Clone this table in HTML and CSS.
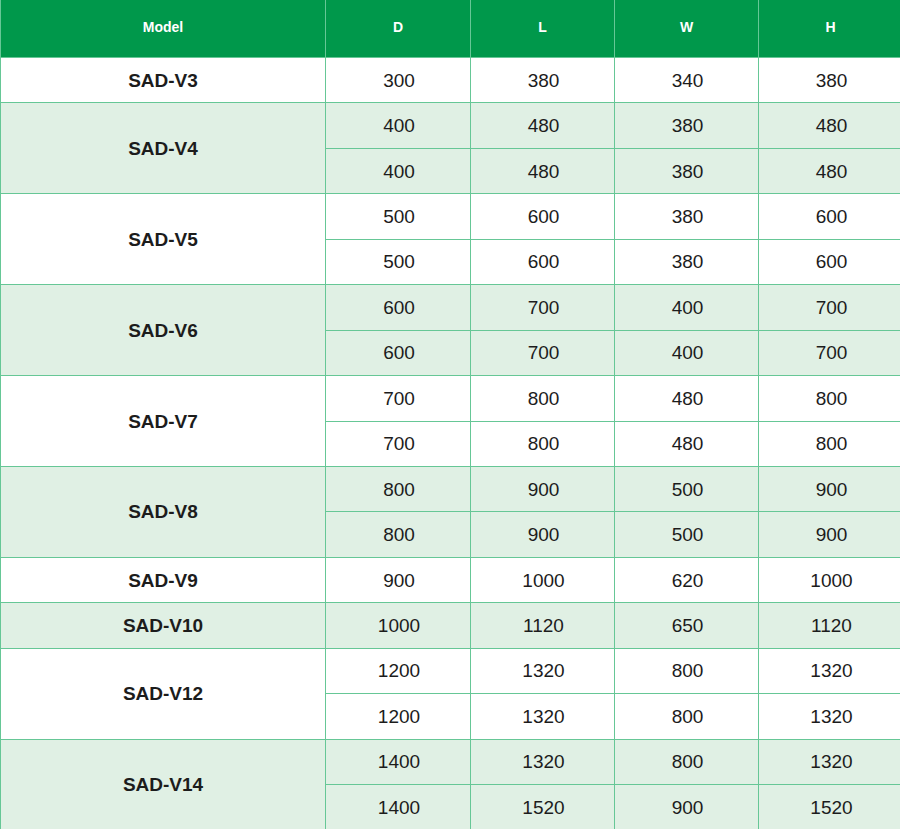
FILE: index.html
```html
<!DOCTYPE html>
<html>
<head>
<meta charset="utf-8">
<link rel="stylesheet" href="styles.css">
</head>
<body>
<div class="table">
  <div class="th">Model</div><div class="th">D</div><div class="th">L</div><div class="th">W</div><div class="th">H</div>

  <div class="c m w">SAD-V3</div><div class="c w">300</div><div class="c w">380</div><div class="c w">340</div><div class="c w">380</div>

  <div class="c m g s2">SAD-V4</div><div class="c g">400</div><div class="c g">480</div><div class="c g">380</div><div class="c g">480</div>
  <div class="c g">400</div><div class="c g">480</div><div class="c g">380</div><div class="c g">480</div>

  <div class="c m w s2">SAD-V5</div><div class="c w">500</div><div class="c w">600</div><div class="c w">380</div><div class="c w">600</div>
  <div class="c w">500</div><div class="c w">600</div><div class="c w">380</div><div class="c w">600</div>

  <div class="c m g s2">SAD-V6</div><div class="c g">600</div><div class="c g">700</div><div class="c g">400</div><div class="c g">700</div>
  <div class="c g">600</div><div class="c g">700</div><div class="c g">400</div><div class="c g">700</div>

  <div class="c m w s2">SAD-V7</div><div class="c w">700</div><div class="c w">800</div><div class="c w">480</div><div class="c w">800</div>
  <div class="c w">700</div><div class="c w">800</div><div class="c w">480</div><div class="c w">800</div>

  <div class="c m g s2">SAD-V8</div><div class="c g">800</div><div class="c g">900</div><div class="c g">500</div><div class="c g">900</div>
  <div class="c g">800</div><div class="c g">900</div><div class="c g">500</div><div class="c g">900</div>

  <div class="c m w">SAD-V9</div><div class="c w">900</div><div class="c w">1000</div><div class="c w">620</div><div class="c w">1000</div>

  <div class="c m g">SAD-V10</div><div class="c g">1000</div><div class="c g">1120</div><div class="c g">650</div><div class="c g">1120</div>

  <div class="c m w s2">SAD-V12</div><div class="c w">1200</div><div class="c w">1320</div><div class="c w">800</div><div class="c w">1320</div>
  <div class="c w">1200</div><div class="c w">1320</div><div class="c w">800</div><div class="c w">1320</div>

  <div class="c m g s2">SAD-V14</div><div class="c g">1400</div><div class="c g">1320</div><div class="c g">800</div><div class="c g">1320</div>
  <div class="c g">1400</div><div class="c g">1520</div><div class="c g">900</div><div class="c g">1520</div>
</div>
</body>
</html>
```

FILE: styles.css
```css
html, body {
  margin: 0;
  padding: 0;
  background: #ffffff;
}
body {
  font-family: "Liberation Sans", Arial, sans-serif;
  overflow: hidden;
}
.table {
  width: 900px;
  display: grid;
  grid-template-columns: 324px 144px 143px 143px 143px;
  grid-template-rows: 57px repeat(17, 44.44px);
  column-gap: 1px;
  row-gap: 1px;
  padding-left: 1px;
  background: #66c796;
  box-sizing: border-box;
}
.th {
  background: #00984b;
  color: #ffffff;
  font-weight: bold;
  font-size: 14px;
  display: flex;
  align-items: center;
  justify-content: center;
  padding-bottom: 4px;
}
.c {
  display: flex;
  align-items: center;
  justify-content: center;
  font-size: 19px;
  color: #1c1c1c;
  padding-left: 2px;
  padding-top: 1px;
}
.m {
  font-weight: bold;
  padding-left: 0;
}
.w {
  background: #ffffff;
}
.g {
  background: #e0f0e4;
}
.s2 {
  grid-row: span 2;
}
```
